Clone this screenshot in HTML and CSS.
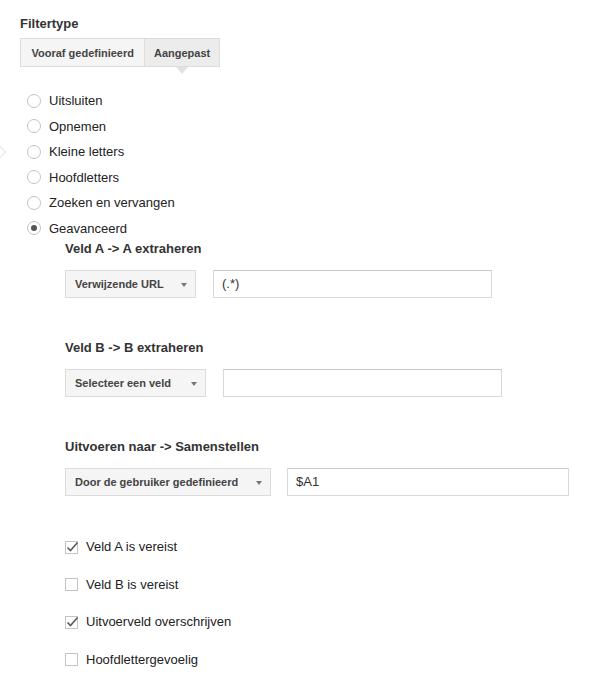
FILE: index.html
```html
<!DOCTYPE html>
<html lang="nl">
<head>
<meta charset="utf-8">
<title>Filtertype</title>
<link rel="stylesheet" href="styles.css">
</head>
<body>
<div class="page">
  <span class="side-chevron"></span>
  <div class="title">Filtertype</div>
  <div class="tabs">
    <div class="tab tab-first">Vooraf gedefinieerd</div>
    <div class="tab tab-active">Aangepast</div>
  </div>
  <ul class="radios">
    <li class="radio-row"><span class="radio"></span>Uitsluiten</li>
    <li class="radio-row"><span class="radio"></span>Opnemen</li>
    <li class="radio-row"><span class="radio"></span>Kleine letters</li>
    <li class="radio-row"><span class="radio"></span>Hoofdletters</li>
    <li class="radio-row"><span class="radio"></span>Zoeken en vervangen</li>
    <li class="radio-row"><span class="radio radio-on"></span>Geavanceerd</li>
  </ul>
  <div class="advanced">
    <div class="field">
      <div class="field-title">Veld A -&gt; A extraheren</div>
      <div class="field-row">
        <div class="select select-a">Verwijzende URL<span class="caret"></span></div>
        <div class="input">(.*)</div>
      </div>
    </div>
    <div class="field">
      <div class="field-title">Veld B -&gt; B extraheren</div>
      <div class="field-row">
        <div class="select select-b">Selecteer een veld<span class="caret"></span></div>
        <div class="input">&nbsp;</div>
      </div>
    </div>
    <div class="field">
      <div class="field-title">Uitvoeren naar -&gt; Samenstellen</div>
      <div class="field-row">
        <div class="select select-c">Door de gebruiker gedefinieerd<span class="caret"></span></div>
        <div class="input input-wide">$A1</div>
      </div>
    </div>
    <ul class="checks">
      <li class="check-row"><svg class="checkbox" width="16" height="16" viewBox="0 0 16 16"><rect x="1.5" y="2.5" width="12" height="12" fill="#fff" stroke="#c4c4c4"/><path d="M3.5 8.5 L6.5 11.5 L13.5 3.5" fill="none" stroke="#5a5a5a" stroke-width="1.6"/></svg>Veld A is vereist</li>
      <li class="check-row"><svg class="checkbox" width="16" height="16" viewBox="0 0 16 16"><rect x="1.5" y="2.5" width="12" height="12" fill="#fff" stroke="#c4c4c4"/></svg>Veld B is vereist</li>
      <li class="check-row"><svg class="checkbox" width="16" height="16" viewBox="0 0 16 16"><rect x="1.5" y="2.5" width="12" height="12" fill="#fff" stroke="#c4c4c4"/><path d="M3.5 8.5 L6.5 11.5 L13.5 3.5" fill="none" stroke="#5a5a5a" stroke-width="1.6"/></svg>Uitvoerveld overschrijven</li>
      <li class="check-row"><svg class="checkbox" width="16" height="16" viewBox="0 0 16 16"><rect x="1.5" y="2.5" width="12" height="12" fill="#fff" stroke="#c4c4c4"/></svg>Hoofdlettergevoelig</li>
    </ul>
  </div>
</div>
</body>
</html>
```

FILE: styles.css
```css
* { box-sizing: border-box; }
html, body { margin: 0; padding: 0; background: #fff; }
body {
  font-family: "Liberation Sans", Arial, sans-serif;
  font-size: 13px;
  color: #222;
}
.page {
  position: relative;
  padding: 16px 0 0 20px;
}
.side-chevron {
  position: absolute;
  left: -6px;
  top: 147px;
  width: 10px;
  height: 10px;
  border-top: 1px solid #e3e3e3;
  border-right: 1px solid #e3e3e3;
  transform: rotate(45deg);
}
.title {
  font-weight: bold;
  font-size: 13px;
  line-height: 16px;
  color: #333;
}
.tabs {
  display: inline-flex;
  margin-top: 6px;
  border: 1px solid #dcdcdc;
  height: 29px;
}
.tab {
  position: relative;
  display: flex;
  align-items: center;
  padding: 0 9px;
  font-size: 11px;
  font-weight: bold;
  color: #444;
  background: #f5f5f5;
}
.tab-first { padding: 0 10px 0 10.5px; }
.tab-active {
  background: #ececec;
  border-left: 1px solid #dcdcdc;
}
.tab-active::after {
  content: "";
  position: absolute;
  left: 50%;
  bottom: -8px;
  margin-left: -6px;
  border-left: 6px solid transparent;
  border-right: 6px solid transparent;
  border-top: 7px solid #e2e2e2;
}
.radios {
  list-style: none;
  margin: 21px 0 0 0;
  padding: 0;
}
.radio-row {
  display: flex;
  align-items: center;
  height: 25.5px;
  padding-left: 7px;
}
.radio {
  width: 14px;
  height: 14px;
  border: 1px solid #c3c3c3;
  border-radius: 50%;
  margin-right: 8px;
  display: flex;
  align-items: center;
  justify-content: center;
  background: #fff;
}
.radio-on::after {
  content: "";
  width: 6px;
  height: 6px;
  border-radius: 50%;
  background: #555;
}
.advanced {
  padding-left: 45px;
}
.field-title {
  font-weight: bold;
  font-size: 13px;
  line-height: 16px;
  color: #333;
}
.field + .field { margin-top: 42px; }
.field-row {
  display: flex;
  align-items: center;
  margin-top: 13px;
}
.select {
  display: flex;
  align-items: center;
  height: 28px;
  padding: 0 8px 0 9px;
  border: 1px solid #dcdcdc;
  background: #f5f5f5;
  font-size: 11px;
  font-weight: bold;
  color: #444;
}
.select-a { width: 131px; }
.select-b { width: 141px; }
.select-c { width: 206px; }
.caret {
  margin-left: auto;
  width: 0;
  height: 0;
  border-left: 3.5px solid transparent;
  border-right: 3.5px solid transparent;
  border-top: 4px solid #777;
  margin-top: 2px;
}
.input {
  margin-left: 17px;
  width: 279px;
  height: 28px;
  border: 1px solid #d9d9d9;
  border-top-color: #c8c8c8;
  background: #fff;
  padding: 0 8px;
  line-height: 26px;
  font-size: 13px;
  color: #333;
}
.input-wide { width: 282px; margin-left: 16px; }
.checks {
  list-style: none;
  margin: 32px 0 0 0;
  padding: 0;
}
.check-row {
  display: flex;
  align-items: center;
  height: 37.5px;
}
.checkbox {
  margin-left: -1px;
  margin-right: 6px;
  flex: none;
}
```
